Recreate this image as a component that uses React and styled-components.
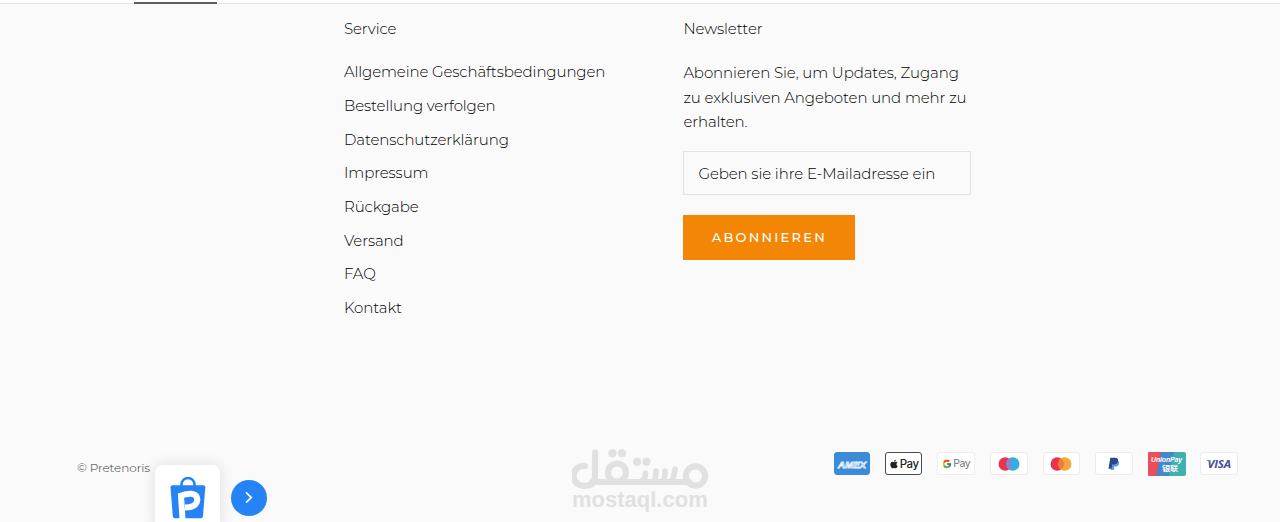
import styled, { createGlobalStyle } from "styled-components";
import { FaApple } from "react-icons/fa";
import { FcGoogle } from "react-icons/fc";

const links = [
  "Allgemeine Geschäftsbedingungen",
  "Bestellung verfolgen",
  "Datenschutzerklärung",
  "Impressum",
  "Rückgabe",
  "Versand",
  "FAQ",
  "Kontakt",
];

const Amex = () => (
  <Card $background="#3a8bd8" $border="#3a8bd8" $width={36}>
    <svg width="34" height="22" viewBox="0 0 34 22">
      <text x="3" y="14.5" textLength="28" lengthAdjust="spacingAndGlyphs" fontFamily="Liberation Sans" fontSize="9.5" fontWeight="700" fontStyle="italic" fill="#3a8bd8" stroke="#e3effa" strokeWidth="0.9">AMEX</text>
    </svg>
  </Card>
);

const ApplePay = () => (
  <Card $border="#4a4a4a">
    <FaApple size={10} color="#222" />
    <PayText $color="#222">Pay</PayText>
  </Card>
);

const GooglePay = () => (
  <Card>
    <FcGoogle size={10} />
    <PayText $color="#777" $light>Pay</PayText>
  </Card>
);

const Circles = ({ right, middle }) => (
  <Card>
    <svg width="22" height="14" viewBox="0 0 22 14">
      <circle cx="7.2" cy="7" r="6.7" fill="#e8344e" />
      <circle cx="14.8" cy="7" r="6.7" fill={right} />
      <path d="M11 1.5a6.7 6.7 0 0 1 0 11a6.7 6.7 0 0 1 0-11z" fill={middle} />
    </svg>
  </Card>
);

const Paypal = () => (
  <Card>
    <svg width="12" height="14" viewBox="0 0 12 14">
      <path d="M4 3.5h5.5c1.5 .6 1.9 2 1.4 3.5c-.5 1.9-1.9 2.6-3.7 2.6h-.8l-.6 3.4h-3z" fill="#5a9bd8" />
      <path d="M2.3 .8h4.7c2.5 0 3.5 1.4 3 3.5c-.5 2.3-2.1 3.2-4.300 3.2h-1.5l-.7 4.2h-3z" fill="#29478f" />
    </svg>
  </Card>
);

const UnionPay = () => (
  <Card $border="transparent" $background="transparent">
    <UnionSvg width="38" height="24" viewBox="0 0 38 24">
      <rect width="38" height="24" rx="2" fill="#3fb0ae" />
      <path d="M2 0h24l-5 24h-19q-2 0-2-2v-20q0-2 2-2z" fill="#4488cc" />
      <path d="M2 0h11l-5 24h-6q-2 0-2-2v-20q0-2 2-2z" fill="#ec4d59" />
      <text x="3" y="10" textLength="31" lengthAdjust="spacingAndGlyphs" fontFamily="Liberation Sans" fontSize="7" fontWeight="700" fontStyle="italic" fill="#fff">UnionPay</text>
      <text x="14" y="19" textLength="16" lengthAdjust="spacingAndGlyphs" fontFamily="Noto Sans CJK SC" fontSize="7" fontWeight="700" fill="#fff">银联</text>
    </UnionSvg>
  </Card>
);

const Visa = () => (
  <Card>
    <svg width="30" height="20" viewBox="0 0 30 20">
      <text x="3.5" y="14" textLength="23.5" lengthAdjust="spacingAndGlyphs" fontFamily="Open Sans" fontSize="11" fontWeight="700" fontStyle="italic" fill="#434c9f">VISA</text>
      <path d="M2 6h3.5l1 2.5z" fill="#7c8b75" />
    </svg>
  </Card>
);

const Mostaql = () => (
  <Watermark>
    <svg width="140" height="41" viewBox="0 0 140 41" fill="none" stroke="#e1e1e1" strokeWidth="6.2" strokeLinecap="round" aria-label="مستقل">
      <path d="M13 17A10 10 0 1 0 13 36.800Q23 36.500 23 27V3.500" />
      <path d="M20 33H117" />
      <circle cx="45" cy="23.5" r="9" />
      <path d="M69 32Q73.500 31 73.500 24M82 32Q84 30 84 22M91 32Q93 30 93 22M100 32Q102 28 103 20" strokeWidth="5.6" />
      <circle cx="123.5" cy="27" r="9.6" />
      <g fill="#e1e1e1" stroke="none">
        <circle cx="40.5" cy="4.3" r="4.2" />
        <circle cx="50" cy="4.3" r="4.2" />
        <circle cx="65" cy="12.7" r="4.2" />
        <circle cx="74.5" cy="12.7" r="4.2" />
      </g>
    </svg>
    <Domain>mostaql.com</Domain>
  </Watermark>
);

const App = () => {
  return (
    <>
      <GlobalStyle />
      <Page>
        <TopBar>
          <Underline />
        </TopBar>
        <Columns>
          <Service>
            <Title>Service</Title>
            <List>
              {links.map((label) => (
                <Link key={label}>{label}</Link>
              ))}
            </List>
          </Service>
          <Newsletter>
            <Title>Newsletter</Title>
            <Paragraph>
              Abonnieren Sie, um Updates, Zugang zu exklusiven Angeboten und mehr zu erhalten.
            </Paragraph>
            <Input placeholder="Geben sie ihre E-Mailadresse ein" />
            <Button>ABONNIEREN</Button>
          </Newsletter>
        </Columns>
        <Bottom>
          <Copyright>© Pretenoris</Copyright>
          <Payments>
            <Amex />
            <ApplePay />
            <GooglePay />
            <Circles right="#36abe4" middle="#8f83c9" />
            <Circles right="#f8a63c" middle="#f5783a" />
            <Paypal />
            <UnionPay />
            <Visa />
          </Payments>
        </Bottom>
        <Mostaql />
        <Widget>
          <svg width="36" height="42" viewBox="0 0 36 42">
            <path d="M11.5 9V7.5a6.3 6.3 0 0 1 13 0V9" fill="none" stroke="#2583f5" strokeWidth="2.5" />
            <path d="M2.5 8.2h31q2 0 1.8 2l-2.3 29q-.2 2-2 2H5q-2 0-2.2-2L.5 10.2q-.2-2 2-2z" fill="#2583f5" />
            <path d="M12.5 42L11 18.5q6-2.2 10.5-1.8q6 .8 5.800 6.300q-.8 7.500-12.300 7.500" fill="none" stroke="#fff" strokeWidth="6" />
          </svg>
        </Widget>
        <Arrow>
          <svg width="8" height="14" viewBox="0 0 8 14">
            <path d="M1.5 1.8L6.2 6.5L1.5 11.2" fill="none" stroke="#fff" strokeWidth="1.7" strokeLinecap="round" />
          </svg>
        </Arrow>
      </Page>
    </>
  );
};

const GlobalStyle = createGlobalStyle`
  * {
    box-sizing: border-box;
  }
  body {
    margin: 0;
    background: #fafafa;
    font-family: Montserrat, Inter, sans-serif;
    font-size: 15px;
    font-weight: 300;
    letter-spacing: -0.12px;
    color: #000;
  }
`;

const Page = styled.div`
  position: relative;
  display: flex;
  flex-direction: column;
  height: 522px;
  overflow: hidden;
`;

const TopBar = styled.div`
  height: 4px;
  padding-left: 134px;
  border-bottom: 1px solid #e3e3e3;
  background: #fff;
`;

const Underline = styled.div`
  width: 83px;
  height: 2px;
  margin-top: 2px;
  background: #5f5d62;
`;

const Columns = styled.div`
  display: flex;
  height: 448px;
  padding: 13px 0 0 344px;
`;

const Service = styled.div`
  width: 339.4px;
`;

const Newsletter = styled.div`
  width: 288px;
  letter-spacing: -0.1px;
`;

const Title = styled.h2`
  margin: 0;
  font-size: 15px;
  font-weight: 300;
  line-height: 24px;
`;

const List = styled.ul`
  margin: 14.4px 0 0;
  padding: 0;
  list-style: none;
`;

const Link = styled.li`
  height: 33.65px;
  line-height: 34px;
  white-space: nowrap;
`;

const Paragraph = styled.p`
  margin: 20px 0 16px;
  line-height: 24.5px;
`;

const Input = styled.input`
  display: block;
  width: 288px;
  height: 44px;
  padding: 1px 14px 0;
  border: 1px solid #e3e3e3;
  background: transparent;
  font: inherit;
  letter-spacing: -0.1px;

  &::placeholder {
    color: #000;
    opacity: 1;
  }
`;

const Button = styled.button`
  width: 172px;
  height: 45px;
  margin-top: 20px;
  padding: 0;
  border: none;
  background: #f48606;
  color: #fff;
  font-family: inherit;
  font-size: 13px;
  font-weight: 500;
  letter-spacing: 2.25px;
`;

const Bottom = styled.div`
  display: flex;
  justify-content: space-between;
  padding: 0 42px 0 77px;
`;

const Copyright = styled.div`
  margin-top: 6px;
  font-size: 12px;
  line-height: 20px;
  letter-spacing: -0.05px;
  color: #333;
`;

const Payments = styled.div`
  display: flex;
  gap: 15px;
`;

const Card = styled.div`
  display: flex;
  align-items: center;
  justify-content: center;
  gap: 1px;
  width: ${({ $width }) => $width || 37.6}px;
  height: 23px;
  border: 1px solid ${({ $border }) => $border || "#ececec"};
  border-radius: 3px;
  background: ${({ $background }) => $background || "#fff"};
`;

const UnionSvg = styled.svg`
  flex-shrink: 0;
`;

const PayText = styled.span`
  font-family: Inter, sans-serif;
  font-size: ${({ $light }) => ($light ? 10.5 : 11.5)}px;
  font-weight: ${({ $light }) => ($light ? 400 : 500)};
  letter-spacing: -0.5px;
  color: ${({ $color }) => $color};
`;

const Watermark = styled.div`
  position: absolute;
  top: 449px;
  left: 572px;
  width: 140px;
`;

const Domain = styled.div`
  margin-top: -5px;
  font-family: "Liberation Sans", Arial, sans-serif;
  font-size: 22px;
  font-weight: 700;
  line-height: 22px;
  letter-spacing: 0;
  color: #e1e1e1;
`;

const Widget = styled.div`
  position: absolute;
  top: 465px;
  left: 155px;
  display: flex;
  justify-content: center;
  width: 65px;
  height: 65px;
  padding-top: 12px;
  border-radius: 8px;
  background: #fff;
  box-shadow: 0 0 14px rgba(0, 0, 0, 0.12);

  svg {
    flex-shrink: 0;
  }
`;

const Arrow = styled.div`
  position: absolute;
  top: 480px;
  left: 231px;
  display: flex;
  align-items: center;
  justify-content: center;
  width: 36px;
  height: 36px;
  border-radius: 50%;
  background: #2583f5;
`;

export default App;
